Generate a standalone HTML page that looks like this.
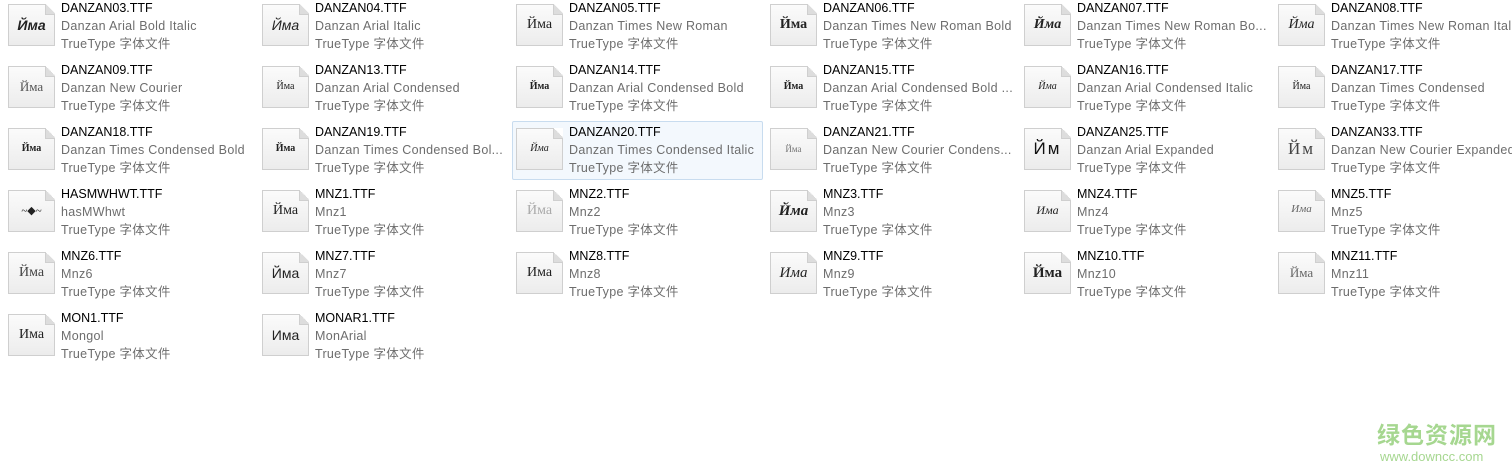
<!DOCTYPE html>
<html><head><meta charset="utf-8"><style>
body{margin:0;width:1512px;height:471px;background:#fff;position:relative;overflow:hidden;font-family:"Liberation Sans","Noto Sans CJK SC",sans-serif;}
.it{position:absolute;width:250px;height:58px;}
.ic{position:absolute;left:0;top:6px;width:45px;height:40px;border:1px solid #cfcfcf;background:linear-gradient(#fbfbfb,#ececec);box-shadow:1px 1px 1px rgba(0,0,0,.08);clip-path:polygon(0 0,80% 0,100% 25%,100% 100%,0 100%);}
.fold{position:absolute;left:37px;top:6px;width:9px;height:10px;background:linear-gradient(225deg,#fff 50%,#ddd 50%);border-left:1px solid #cfcfcf;border-bottom:1px solid #cfcfcf;}
.ic span{position:absolute;left:0;right:0;top:12px;text-align:center;font-family:"Liberation Serif",serif;font-size:14px;color:#222;}
.t{position:absolute;left:53px;top:1px;font-size:12.5px;line-height:18px;white-space:nowrap;color:#000;}
.t div+div{color:#6d6d6d;letter-spacing:0.3px;}
.sel{position:absolute;left:512px;top:121px;width:249px;height:57px;background:#f3f8fd;border:1px solid #c8dcef;border-radius:2px;}
.wm{position:absolute;left:1377px;top:420px;color:#a6d790;font-size:23px;font-weight:bold;letter-spacing:1px;font-family:"Noto Sans CJK SC",sans-serif;line-height:26px}
.wm2{position:absolute;left:1380px;top:449px;color:#a6d790;font-size:13px;}
</style></head><body>
<div class="sel"></div>
<div class="it" style="left:8px;top:-2px"><div class="ic"><span style="font-family:'Liberation Sans';font-weight:bold;font-style:italic">Йма</span></div><div class="fold"></div><div class="t"><div>DANZAN03.TTF</div><div>Danzan Arial Bold Italic</div><div>TrueType 字体文件</div></div></div>
<div class="it" style="left:262px;top:-2px"><div class="ic"><span style="font-family:'Liberation Sans';font-style:italic">Йма</span></div><div class="fold"></div><div class="t"><div>DANZAN04.TTF</div><div>Danzan Arial Italic</div><div>TrueType 字体文件</div></div></div>
<div class="it" style="left:516px;top:-2px"><div class="ic"><span>Йма</span></div><div class="fold"></div><div class="t"><div>DANZAN05.TTF</div><div>Danzan Times New Roman</div><div>TrueType 字体文件</div></div></div>
<div class="it" style="left:770px;top:-2px"><div class="ic"><span style="font-weight:bold">Йма</span></div><div class="fold"></div><div class="t"><div>DANZAN06.TTF</div><div>Danzan Times New Roman Bold</div><div>TrueType 字体文件</div></div></div>
<div class="it" style="left:1024px;top:-2px"><div class="ic"><span style="font-weight:bold;font-style:italic">Йма</span></div><div class="fold"></div><div class="t"><div>DANZAN07.TTF</div><div>Danzan Times New Roman Bo...</div><div>TrueType 字体文件</div></div></div>
<div class="it" style="left:1278px;top:-2px"><div class="ic"><span style="font-style:italic">Йма</span></div><div class="fold"></div><div class="t"><div>DANZAN08.TTF</div><div>Danzan Times New Roman Itali</div><div>TrueType 字体文件</div></div></div>
<div class="it" style="left:8px;top:60px"><div class="ic"><span style="font-size:13px;color:#555">Йма</span></div><div class="fold"></div><div class="t"><div>DANZAN09.TTF</div><div>Danzan New Courier</div><div>TrueType 字体文件</div></div></div>
<div class="it" style="left:262px;top:60px"><div class="ic"><span style="font-size:10px;top:14px">Йма</span></div><div class="fold"></div><div class="t"><div>DANZAN13.TTF</div><div>Danzan Arial Condensed</div><div>TrueType 字体文件</div></div></div>
<div class="it" style="left:516px;top:60px"><div class="ic"><span style="font-size:10px;top:14px;font-weight:bold">Йма</span></div><div class="fold"></div><div class="t"><div>DANZAN14.TTF</div><div>Danzan Arial Condensed Bold</div><div>TrueType 字体文件</div></div></div>
<div class="it" style="left:770px;top:60px"><div class="ic"><span style="font-size:10px;top:14px;font-weight:bold">Йма</span></div><div class="fold"></div><div class="t"><div>DANZAN15.TTF</div><div>Danzan Arial Condensed Bold ...</div><div>TrueType 字体文件</div></div></div>
<div class="it" style="left:1024px;top:60px"><div class="ic"><span style="font-size:10px;top:14px;font-style:italic">Йма</span></div><div class="fold"></div><div class="t"><div>DANZAN16.TTF</div><div>Danzan Arial Condensed Italic</div><div>TrueType 字体文件</div></div></div>
<div class="it" style="left:1278px;top:60px"><div class="ic"><span style="font-size:10px;top:14px">Йма</span></div><div class="fold"></div><div class="t"><div>DANZAN17.TTF</div><div>Danzan Times Condensed</div><div>TrueType 字体文件</div></div></div>
<div class="it" style="left:8px;top:122px"><div class="ic"><span style="font-size:10px;top:14px;font-weight:bold">Йма</span></div><div class="fold"></div><div class="t"><div>DANZAN18.TTF</div><div>Danzan Times Condensed Bold</div><div>TrueType 字体文件</div></div></div>
<div class="it" style="left:262px;top:122px"><div class="ic"><span style="font-size:10px;top:14px;font-weight:bold">Йма</span></div><div class="fold"></div><div class="t"><div>DANZAN19.TTF</div><div>Danzan Times Condensed Bol...</div><div>TrueType 字体文件</div></div></div>
<div class="it" style="left:516px;top:122px"><div class="ic"><span style="font-size:10px;top:14px;font-style:italic">Йма</span></div><div class="fold"></div><div class="t"><div>DANZAN20.TTF</div><div>Danzan Times Condensed Italic</div><div>TrueType 字体文件</div></div></div>
<div class="it" style="left:770px;top:122px"><div class="ic"><span style="font-size:9px;top:15px;color:#777">Йма</span></div><div class="fold"></div><div class="t"><div>DANZAN21.TTF</div><div>Danzan New Courier Condens...</div><div>TrueType 字体文件</div></div></div>
<div class="it" style="left:1024px;top:122px"><div class="ic"><span style="font-family:'Liberation Sans';font-size:17px;top:10px;letter-spacing:2px;color:#111">Йм</span></div><div class="fold"></div><div class="t"><div>DANZAN25.TTF</div><div>Danzan Arial Expanded</div><div>TrueType 字体文件</div></div></div>
<div class="it" style="left:1278px;top:122px"><div class="ic"><span style="font-size:17px;top:10px;letter-spacing:2px;color:#444">Йм</span></div><div class="fold"></div><div class="t"><div>DANZAN33.TTF</div><div>Danzan New Courier Expanded</div><div>TrueType 字体文件</div></div></div>
<div class="it" style="left:8px;top:184px"><div class="ic"><span style="font-size:11px;top:13px">~◆~</span></div><div class="fold"></div><div class="t"><div>HASMWHWT.TTF</div><div>hasMWhwt</div><div>TrueType 字体文件</div></div></div>
<div class="it" style="left:262px;top:184px"><div class="ic"><span>Йма</span></div><div class="fold"></div><div class="t"><div>MNZ1.TTF</div><div>Mnz1</div><div>TrueType 字体文件</div></div></div>
<div class="it" style="left:516px;top:184px"><div class="ic"><span style="color:#aaa">Йма</span></div><div class="fold"></div><div class="t"><div>MNZ2.TTF</div><div>Mnz2</div><div>TrueType 字体文件</div></div></div>
<div class="it" style="left:770px;top:184px"><div class="ic"><span style="font-weight:bold;font-style:italic;font-size:15px">Йма</span></div><div class="fold"></div><div class="t"><div>MNZ3.TTF</div><div>Mnz3</div><div>TrueType 字体文件</div></div></div>
<div class="it" style="left:1024px;top:184px"><div class="ic"><span style="font-style:italic;font-size:12px">Има</span></div><div class="fold"></div><div class="t"><div>MNZ4.TTF</div><div>Mnz4</div><div>TrueType 字体文件</div></div></div>
<div class="it" style="left:1278px;top:184px"><div class="ic"><span style="font-style:italic;font-size:11px;color:#666">Има</span></div><div class="fold"></div><div class="t"><div>MNZ5.TTF</div><div>Mnz5</div><div>TrueType 字体文件</div></div></div>
<div class="it" style="left:8px;top:246px"><div class="ic"><span style="color:#444">Йма</span></div><div class="fold"></div><div class="t"><div>MNZ6.TTF</div><div>Mnz6</div><div>TrueType 字体文件</div></div></div>
<div class="it" style="left:262px;top:246px"><div class="ic"><span style="font-family:'Liberation Sans'">Йма</span></div><div class="fold"></div><div class="t"><div>MNZ7.TTF</div><div>Mnz7</div><div>TrueType 字体文件</div></div></div>
<div class="it" style="left:516px;top:246px"><div class="ic"><span>Има</span></div><div class="fold"></div><div class="t"><div>MNZ8.TTF</div><div>Mnz8</div><div>TrueType 字体文件</div></div></div>
<div class="it" style="left:770px;top:246px"><div class="ic"><span style="font-style:italic;font-size:15px">Има</span></div><div class="fold"></div><div class="t"><div>MNZ9.TTF</div><div>Mnz9</div><div>TrueType 字体文件</div></div></div>
<div class="it" style="left:1024px;top:246px"><div class="ic"><span style="font-weight:bold;font-size:15px">Йма</span></div><div class="fold"></div><div class="t"><div>MNZ10.TTF</div><div>Mnz10</div><div>TrueType 字体文件</div></div></div>
<div class="it" style="left:1278px;top:246px"><div class="ic"><span style="color:#666;font-size:13px">Йма</span></div><div class="fold"></div><div class="t"><div>MNZ11.TTF</div><div>Mnz11</div><div>TrueType 字体文件</div></div></div>
<div class="it" style="left:8px;top:308px"><div class="ic"><span>Има</span></div><div class="fold"></div><div class="t"><div>MON1.TTF</div><div>Mongol</div><div>TrueType 字体文件</div></div></div>
<div class="it" style="left:262px;top:308px"><div class="ic"><span style="font-family:'Liberation Sans'">Има</span></div><div class="fold"></div><div class="t"><div>MONAR1.TTF</div><div>MonArial</div><div>TrueType 字体文件</div></div></div>
<div class="wm">绿色资源网</div>
<div class="wm2">www.downcc.com</div>
</body></html>
